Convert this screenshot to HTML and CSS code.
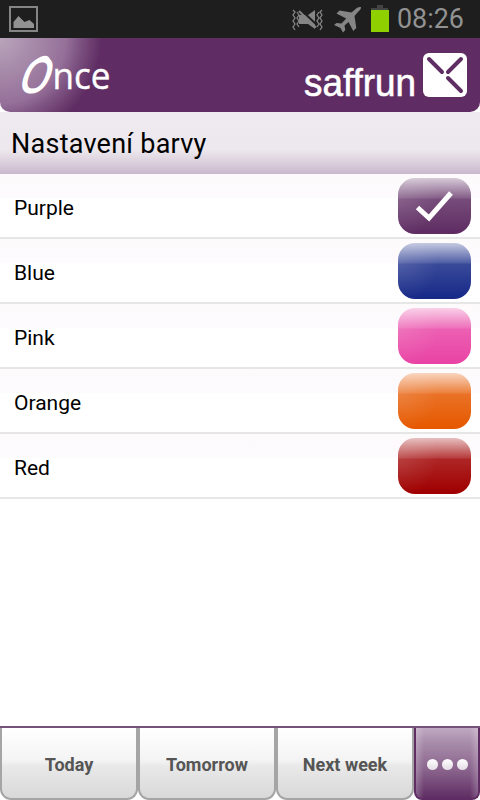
FILE: index.html
```html
<!DOCTYPE html>
<html lang="cs">
<head>
<meta charset="utf-8">
<title>Once</title>
<link rel="stylesheet" href="styles.css">
</head>
<body>
<div class="screen">
  <div class="status">
    <svg class="picture" width="29" height="26" viewBox="0 0 29 26"><path d="M1 1h27v24H1z" fill="none" stroke="#858585" stroke-width="2"/><path d="M4.500 22v-6l5-6 6 6 5-2 4.500 4v4z" fill="#929292"/></svg>
    <svg class="indicators" width="98" height="38" viewBox="292 0 98 38">
      <g fill="none" stroke="#858585" stroke-width="1.300"><path d="M293 10l2 2-2 3 2 3-2 3 2 3-2 3 2 3M297 12l2 3-2 3 2 3-2 3 2 3M319 12l-2 3 2 3-2 3 2 3-2 3M322 10l-2 2 2 3-2 3 2 3-2 3 2 3-2 3"/></g>
      <path d="M299 15h9l7-5v19l-7-5h-9z" fill="#858585"/><path d="M301 10l16 15" stroke="#1e1e1e" stroke-width="2"/><path d="M299 11l17 16.500" stroke="#858585" stroke-width="2"/>
      <path d="M361 7c-2.500-.4-4.500 1-6.500 3l-3 2.600-12-2.200-3 3 9.700 5.200-4.700 5-5-.6-2.500 2 6.500 3 2.500 4.500 2.300-2.500-.8-4.500 4-3.500 4.800 9 3-3-1.800-12 3-3.500c2-2 3.800-3.500 3.500-5.500z" fill="#858585"/>
      <path d="M377 5h6v3h5v2h-17V8h6z" fill="#444"/><path d="M371 10h18v22h-18z" fill="#8fd000"/>
    </svg>
    <svg class="clock" width="70" height="38"><text x="0" y="27.500" textLength="67" lengthAdjust="spacingAndGlyphs">08:26</text></svg>
  </div>
  <header class="brand">
    <svg class="once" width="100" height="60" viewBox="15 45 100 60">
      <text class="once-o" transform="translate(15.500 92.500) skewX(-20)" textLength="31" lengthAdjust="spacingAndGlyphs">O</text>
      <path d="M36 60q6-5 11-4 4 2 2.500 5.500-7-1.500-13 2z" fill="#fff"/>
      <text class="once-rest" x="52.500" y="89" textLength="58" lengthAdjust="spacingAndGlyphs">nce</text>
    </svg>
    <svg class="saffrun" width="166" height="60" viewBox="303 45 166 60">
      <text x="304" y="96" textLength="112" lengthAdjust="spacingAndGlyphs">saffrun</text>
      <rect x="423" y="53" width="44" height="44" rx="6" fill="#fff"/>
      <path d="M429 59l13 13M461 59l-13 13M448 78l13 13" stroke="#5f2d63" stroke-width="4" stroke-linecap="round"/>
    </svg>
  </header>
  <h1>Nastavení barvy</h1>
  <ul class="colors">
    <li><span>Purple</span><i class="swatch purple"><svg width="73" height="56" viewBox="0 0 73 56"><path d="M19.500 29.500L31 40 53 15" fill="none" stroke="#fff" stroke-width="5"/></svg></i></li>
    <li><span>Blue</span><i class="swatch blue"></i></li>
    <li><span>Pink</span><i class="swatch pink"></i></li>
    <li><span>Orange</span><i class="swatch orange"></i></li>
    <li><span>Red</span><i class="swatch red"></i></li>
  </ul>
  <nav>
    <a>Today</a><a>Tomorrow</a><a>Next week</a>
    <a class="more"><b></b><b></b><b></b></a>
  </nav>
</div>
</body>
</html>
```
FILE: styles.css
```css
* { box-sizing: border-box; }
body { margin: 0; background: #fff; font-family: Roboto, sans-serif; }
svg { display: block; }
.screen { width: 480px; height: 800px; display: flex; flex-direction: column; overflow: hidden; }
.status { height: 38px; flex: none; background: #1e1e1e; display: flex; align-items: flex-start; }
.picture { margin: 6px 0 0 9px; }
.indicators { margin-left: 254px; }
.clock { margin-left: 7px; }
.clock text { font: 27px Roboto, sans-serif; fill: #929292; }
.brand {
  height: 74px; flex: none; display: flex; justify-content: space-between;
  padding: 7px 11px 0 15px; border-radius: 0 0 10px 10px;
  background: radial-gradient(circle at 0 0, #b9a5bb 0, #957099 66px, #7d5381 80px, #5f2d63 101px);
}
.once { overflow: visible; }
.once text { fill: #fff; }
.once-o { font: 600 49px "Open Sans", sans-serif; }
.once-rest { font: 37px "Open Sans", sans-serif; stroke: #fff; stroke-width: .4px; }
.saffrun text { font: 39px "Liberation Sans", sans-serif; fill: #fff; stroke: #fff; stroke-width: .6px; }
h1 {
  height: 62px; flex: none; margin: 0; padding-left: 11px; font-size: 27px; font-weight: 400;
  line-height: 64px; letter-spacing: .25px; color: #000;
  background: linear-gradient(#eeeaef 0, #ede8ed 38px, #c9b8cd 62px);
}
.colors { list-style: none; margin: 0; padding: 0; }
.colors li {
  height: 65px; padding: 0 9px 0 14px; display: flex; justify-content: space-between;
  align-items: flex-start; border-bottom: 2px solid #e6e6e6;
  background: linear-gradient(#fdfafc 0, #fdfbfd 23px, #fff 25px);
  font-size: 21px; line-height: 69px; color: #000;
}
.swatch {
  display: block; width: 73px; height: 56px; margin-top: 4px; border-radius: 17px;
  background: linear-gradient(rgba(255, 255, 255, .75) 0, rgba(255, 255, 255, .24) 20px, rgba(255, 255, 255, .15) 21px, transparent 54px), radial-gradient(circle at 0 20px, rgba(255, 255, 255, .12), transparent 40px), var(--tone);
}
.purple { --tone: #5f2d63; }
.blue { --tone: #172a88; }
.pink { --tone: #e944a5; }
.orange { --tone: #e65900; }
.red { --tone: #a00000; }
nav { height: 74px; margin-top: auto; display: flex; border-top: 2px solid #76527a; }
nav a {
  width: 138px; height: 72px; border: 2px solid #a5a5a5; border-top: 0; border-radius: 0 0 11px 11px;
  background: linear-gradient(#fff 0, #f4f4f4 32px, #e9e9e9 38px, #d9d9d9 70px);
  color: #555; font-size: 18px; font-weight: 700; line-height: 74px; text-align: center;
}
nav .more {
  width: 66px; display: flex; align-items: center; justify-content: center; gap: 4px;
  border-color: #5f2d63;
  border-radius: 0 0 8px 8px;
  background: linear-gradient(90deg, rgba(255, 255, 255, .22), transparent 8px 54px, rgba(255, 255, 255, .22)), linear-gradient(#c0a9c2 0, #a98dab 14px, #88628b 43px, #5f2d63 70px);
}
.more b { width: 11px; height: 11px; border-radius: 50%; margin-top: 3px; background: linear-gradient(#fff, #e4dce5); }
```
